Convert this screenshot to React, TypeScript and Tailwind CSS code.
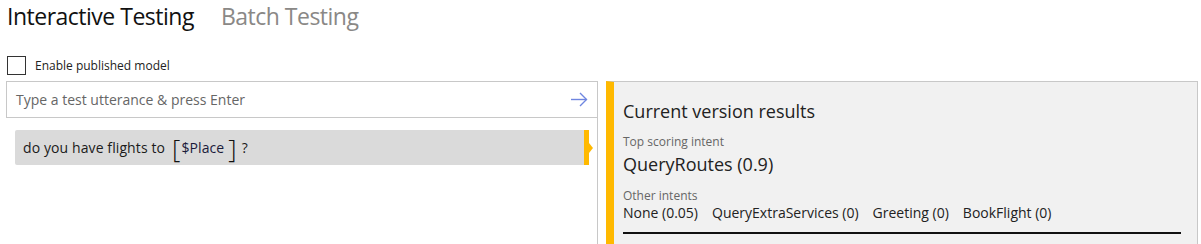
import React from "react";

const intents = ["None (0.05)", "QueryExtraServices (0)", "Greeting (0)", "BookFlight (0)"];

function ArrowRight() {
  return (
    <svg width="18" height="15" viewBox="0 0 18 15" fill="none" stroke="#6f86e0" strokeWidth="1.4">
      <path d="M1 7.5H16.5" />
      <path d="M10 1L16.5 7.5L10 14" />
    </svg>
  );
}

export default function App() {
  return (
    <div className="w-[1201px] h-[244px] overflow-hidden bg-white text-[#222] font-['Segoe_UI','Open_Sans',sans-serif]">
      {/* tabs */}
      <div className="flex items-baseline gap-[27px] pl-[7px] text-[23px] leading-[32px] tracking-[-0.5px]">
        <span className="text-[#111]">Interactive Testing</span>
        <span className="text-[#8a8886]">Batch Testing</span>
      </div>

      {/* checkbox */}
      <label className="mt-[24px] flex items-center pl-[7px]">
        <span className="w-[19px] h-[19px] border border-[#333] bg-white" />
        <span className="ml-[9px] text-[12px] leading-[16px] text-[#222]">Enable published model</span>
      </label>

      <div className="mt-[6px] flex gap-[8px] pl-[6px]">
        {/* left: utterances */}
        <div className="w-[592px] h-[170px] border-r border-[#c8c8c8] flex flex-col">
          <div className="h-[37px] border border-r-0 border-[#c8c8c8] flex items-center justify-between pl-[9px] pr-[9px]">
            <span className="text-[14px] leading-[20px] text-[#666]">Type a test utterance &amp; press Enter</span>
            <ArrowRight />
          </div>
          <div className="mt-[12px] ml-[9px] flex items-stretch">
            <div className="w-[569px] h-[35px] bg-[#dadada] rounded-l-[2px] flex items-center pl-[8px] text-[14px] leading-[20px] tracking-[0.1px] text-[#1b1b1b]">
              <span>do you have flights to</span>
              <span className="ml-[7px] text-[26px] leading-[20px] font-light text-[#111]">[</span>
              <span className="ml-[1px] text-[#1a1a3a]">$Place</span>
              <span className="ml-[4px] text-[26px] leading-[20px] font-light text-[#111]">]</span>
              <span className="ml-[5px]">?</span>
            </div>
            <div className="w-[5px] bg-[#ffb900]" />
            <div className="self-center w-0 h-0 border-y-[5px] border-y-transparent border-l-[4px] border-l-[#ffb900]" />
          </div>
        </div>

        {/* right: results */}
        <div className="w-[592px] h-[170px] bg-[#f1f1f1] border-t border-r border-[#c8c8c8] border-l-[8px] border-l-[#ffb900] pl-[9px] pr-[16px] pt-[17px]">
          <div className="text-[18px] leading-[24px] text-[#222]">Current version results</div>
          <div className="mt-[11px] text-[12px] leading-[16px] text-[#666]">Top scoring intent</div>
          <div className="mt-[2px] text-[18px] leading-[24px] text-[#222]">QueryRoutes (0.9)</div>
          <div className="mt-[12px] text-[12px] leading-[16px] text-[#666]">Other intents</div>
          <div className="flex gap-[14px] text-[14px] leading-[18px] text-[#222]">
            {intents.map((i) => (
              <span key={i}>{i}</span>
            ))}
          </div>
          <div className="mt-[10px] h-[2px] bg-[#111]" />
        </div>
      </div>
    </div>
  );
}
